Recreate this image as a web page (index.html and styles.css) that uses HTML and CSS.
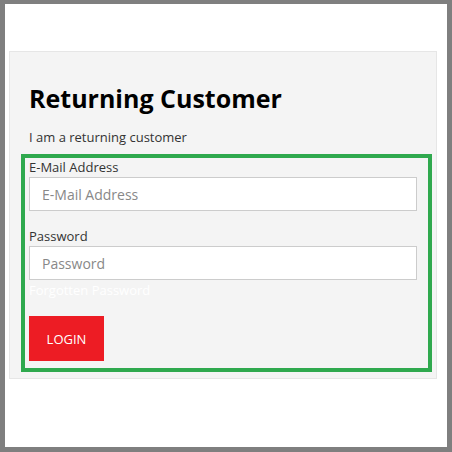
FILE: index.html
```html
<!DOCTYPE html>
<html lang="en">
<head>
    <meta charset="UTF-8">
    <meta name="viewport" content="width=device-width, initial-scale=1.0">
    <title>Account Login</title>
    <link rel="stylesheet" href="styles.css">
</head>
<body>
    <div class="page">
        <div class="well">
            <h2>Returning Customer</h2>
            <p class="lead">I am a returning customer</p>
            <form class="login-form" onsubmit="return false;">
                <div class="form-group">
                    <label for="input-email">E-Mail Address</label>
                    <input type="text" id="input-email" placeholder="E-Mail Address">
                </div>
                <div class="form-group">
                    <label for="input-password">Password</label>
                    <input type="password" id="input-password" placeholder="Password">
                    <a href="#" class="forgot">Forgotten Password</a>
                </div>
                <button type="submit" class="btn-login">LOGIN</button>
            </form>
        </div>
    </div>
</body>
</html>
```

FILE: styles.css
```css
html, body {
    margin: 0;
    height: 100%;
}

body {
    background-color: #7f7f7f;
    padding: 4px 5px 5px 5px;
    box-sizing: border-box;
    font-family: "Open Sans", Arial, sans-serif;
    font-size: 13px;
    color: #333;
}

.page {
    background-color: #fff;
    height: 100%;
    padding: 47px 10px 0 4px;
    box-sizing: border-box;
}

.well {
    background-color: #f4f4f4;
    border: 1px solid #e6e6e6;
    padding: 31px 19px 6px 19px;
}

h2 {
    margin: 0;
    font-size: 25px;
    line-height: 30px;
    font-weight: 700;
    color: #000;
}

.lead {
    margin: 15px 0 8px 0;
    line-height: 18px;
}

.login-form {
    border: 4px solid #2fa94e;
    margin: 0 -15px 0 -8px;
    padding: 0 11px 7px 4px;
}

.form-group {
    margin-bottom: 16px;
}

.form-group label {
    display: block;
    line-height: 18px;
    margin-bottom: 1px;
}

.form-group input {
    display: block;
    width: 100%;
    box-sizing: border-box;
    height: 34px;
    padding: 6px 12px;
    font-family: "Open Sans", Arial, sans-serif;
    font-size: 14px;
    color: #555;
    background-color: #fff;
    border: 1px solid #ccc;
    outline: none;
}

.form-group input::placeholder {
    color: #888;
}

.forgot {
    display: block;
    line-height: 20px;
    color: #fff;
    text-decoration: none;
}

.btn-login {
    display: block;
    width: 75px;
    height: 45px;
    border: none;
    background-color: #ed1c24;
    color: #fff;
    font-family: "Open Sans", Arial, sans-serif;
    font-size: 13px;
    cursor: pointer;
}
```
